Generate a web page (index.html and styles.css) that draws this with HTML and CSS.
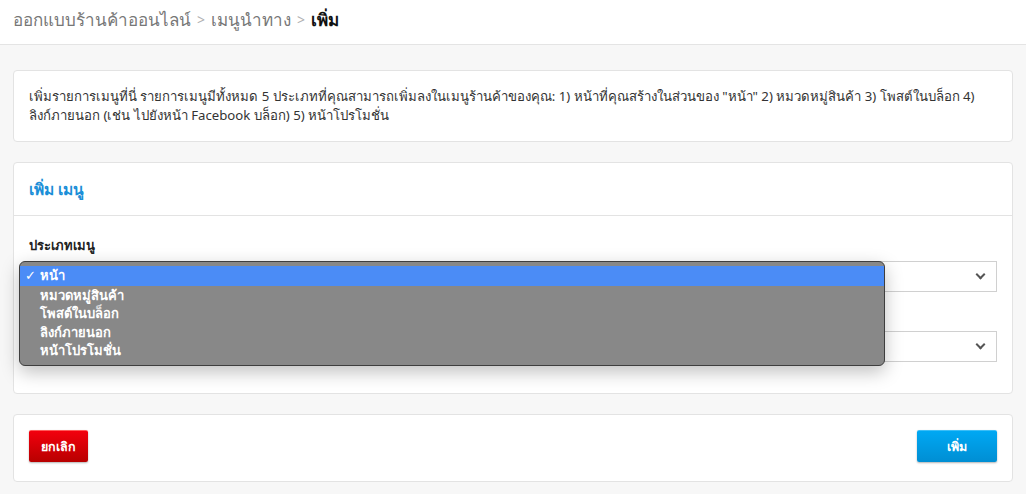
FILE: index.html
```html
<!DOCTYPE html>
<html lang="th">
<head>
<meta charset="utf-8">
<title>เพิ่ม เมนู</title>
<link rel="stylesheet" href="styles.css">
</head>
<body>
<header class="topbar">
  <nav class="crumbs">
    <span class="crumb">ออกแบบร้านค้าออนไลน์</span>
    <span class="sep">&gt;</span>
    <span class="crumb">เมนูนำทาง</span>
    <span class="sep">&gt;</span>
    <span class="crumb current">เพิ่ม</span>
  </nav>
</header>
<main class="content">
  <section class="card intro">
    <p>เพิ่มรายการเมนูที่นี่ รายการเมนูมีทั้งหมด 5 ประเภทที่คุณสามารถเพิ่มลงในเมนูร้านค้าของคุณ: 1) หน้าที่คุณสร้างในส่วนของ "หน้า" 2) หมวดหมู่สินค้า 3) โพสต์ในบล็อก 4) ลิงก์ภายนอก (เช่น ไปยังหน้า Facebook บล็อก) 5) หน้าโปรโมชั่น</p>
  </section>
  <section class="card">
    <div class="card-head">เพิ่ม เมนู</div>
    <div class="card-body">
      <div class="group">
        <label class="label">ประเภทเมนู</label>
        <div class="select"><span class="chev"></span></div>
        <ul class="popup">
          <li class="opt on"><span class="tick">✓</span>หน้า</li>
          <li class="opt">หมวดหมู่สินค้า</li>
          <li class="opt">โพสต์ในบล็อก</li>
          <li class="opt">ลิงก์ภายนอก</li>
          <li class="opt">หน้าโปรโมชั่น</li>
        </ul>
      </div>
      <div class="group">
        <label class="label spacer" aria-label="หน้า"></label>
        <div class="select"><span class="chev"></span></div>
      </div>
    </div>
  </section>
  <section class="card actions">
    <button class="btn btn-cancel">ยกเลิก</button>
    <button class="btn btn-add">เพิ่ม</button>
  </section>
</main>
</body>
</html>
```

FILE: styles.css
```css
* { box-sizing: border-box; }
body {
  margin: 0;
  background: #f7f7f7;
  font-family: "Noto Sans", "Open Sans", sans-serif;
  color: #333;
}
.topbar {
  height: 45px;
  background: #fff;
  border-bottom: 1px solid #e4e4e4;
  display: flex;
  align-items: center;
  padding: 0 13px 6px;
}
.crumbs {
  display: flex;
  align-items: center;
  gap: 6px;
  font-size: 17px;
  color: #777;
}
.sep { color: #b0b0b0; font-size: 14px; }
.current { color: #111; font-weight: 700; }
.content {
  padding: 25px 13px 0;
  display: flex;
  flex-direction: column;
  gap: 20px;
}
.card {
  background: #fff;
  border: 1px solid #e3e3e3;
  border-radius: 4px;
}
.intro { padding: 16px 15px 16px; }
.intro p {
  margin: 0;
  font-size: 13.2px;
  line-height: 19px;
  color: #333;
}
.card-head {
  height: 53px;
  border-bottom: 1px solid #e3e3e3;
  padding: 0 15px 0;
  display: flex;
  align-items: center;
  font-size: 15.5px;
  font-weight: 700;
  color: #1b8fd8;
}
.card-body { padding: 20px 15px 31px; }
.group { position: relative; }
.group + .group { margin-top: 14px; }
.label {
  display: block;
  font-size: 13px;
  font-weight: 700;
  line-height: 18px;
  color: #222;
  margin-bottom: 7px;
}
.spacer { height: 18px; }
.select {
  height: 31px;
  border: 1px solid #d0d0d0;
  background: #fff;
  display: flex;
  align-items: center;
  justify-content: flex-end;
  padding-right: 12px;
}
.chev {
  width: 7px;
  height: 7px;
  border-right: 2px solid #555;
  border-bottom: 2px solid #555;
  transform: rotate(45deg);
  margin-top: -4px;
}
.popup {
  position: absolute;
  left: -10px;
  top: 25px;
  width: 866px;
  height: 105px;
  margin: 0;
  padding: 4px 0 0;
  list-style: none;
  background: #888;
  border: 1px solid #3e3e3e;
  border-radius: 6px;
  box-shadow: 0 6px 18px rgba(0,0,0,0.25);
  z-index: 5;
}
.opt {
  position: relative;
  height: 18.5px;
  line-height: 18px;
  padding-left: 20px;
  font-size: 13px;
  font-weight: 700;
  color: #fff;
}
.opt.on { background: #4b8cf6; height: 19.5px; }
.tick {
  position: absolute;
  left: 5px;
  top: 0;
  font-weight: 400;
}
.actions {
  padding: 15px 15px 19px;
  display: flex;
  justify-content: space-between;
}
.btn {
  height: 32px;
  border: none;
  border-radius: 2px;
  color: #fff;
  font-family: "Noto Sans", sans-serif;
  font-size: 12.5px;
  font-weight: 700;
  box-shadow: 0 1px 2px rgba(0,0,0,0.3);
  cursor: pointer;
}
.btn-cancel {
  width: 59px;
  background: linear-gradient(#f2000d, #b80000);
  border-top: 1px solid #ff5a5a;
}
.btn-add {
  width: 80px;
  background: linear-gradient(#00a8f3, #008ed3);
  border-top: 1px solid #3cbef7;
}
```
